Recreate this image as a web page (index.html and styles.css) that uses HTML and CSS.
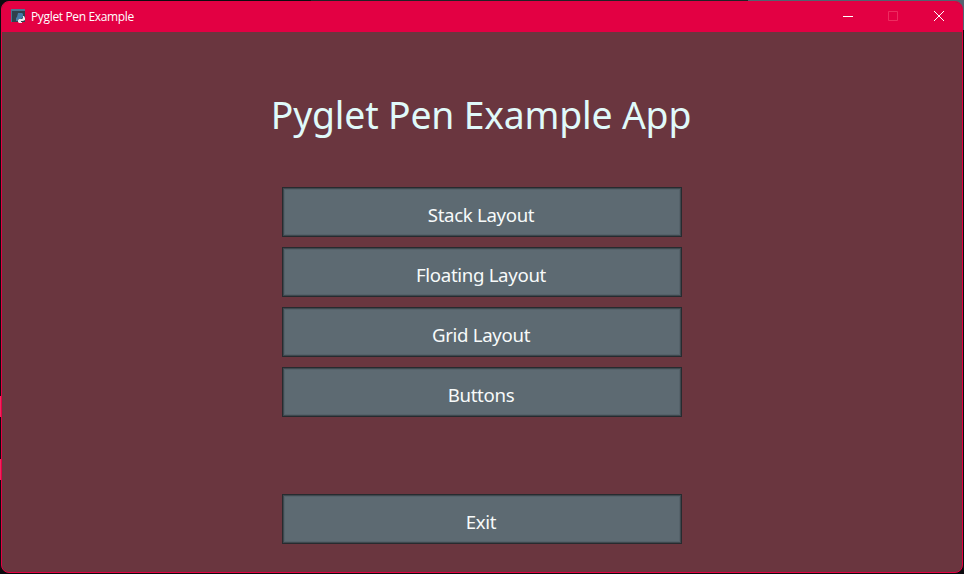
FILE: index.html
```html
<!DOCTYPE html>
<html lang="en">
<head>
<meta charset="utf-8">
<title>Pyglet Pen Example</title>
<link rel="stylesheet" href="styles.css">
</head>
<body>
<div class="window">
  <header class="titlebar">
    <svg class="app-icon" width="16" height="16" viewBox="0 0 16 16">
      <path fill="#30414c" d="M1 0h14v13H1z"/>
      <path fill="#4b7693" d="M1 0h14v2H1zM1 2h1v11H1z"/>
      <path fill="#467ca7" d="M8 4h4l1 1v3l-2 2H8v2H6V9l1-1z"/>
      <path fill="#e8e8ea" d="M13 7h1l1 2v2l-2 1h-2v1h1v1H9l-1-1v-2l1-1h3l1-1z"/>
    </svg>
    <span class="caption">Pyglet Pen Example</span>
    <div class="controls">
      <svg class="control" width="46" height="30" viewBox="0 0 46 30"><path d="M19 14.5h10" stroke="#fff"/></svg>
      <svg class="control" width="46" height="30" viewBox="0 0 46 30"><path d="M18.5 9.5h9v9h-9z" fill="none" stroke="#ee2c60"/></svg>
      <svg class="control" width="46" height="30" viewBox="0 0 46 30"><path d="M18 9l10 10M28 9l-10 10" stroke="#fff"/></svg>
    </div>
  </header>
  <main class="content">
    <h1 class="heading">Pyglet Pen Example App</h1>
    <nav class="menu">
      <button class="button">Stack Layout</button>
      <button class="button">Floating Layout</button>
      <button class="button">Grid Layout</button>
      <button class="button">Buttons</button>
    </nav>
    <button class="button exit">Exit</button>
  </main>
</div>
</body>
</html>
```
FILE: styles.css
```css
* { box-sizing: border-box; }
body {
  margin: 0;
  padding: 1px;
  height: 574px;
  overflow: hidden;
  font-family: "Noto Sans", sans-serif;
  background:
    linear-gradient(#f0285f, #f0285f) 0 396px / 1px 21px no-repeat,
    linear-gradient(#f0285f, #f0285f) 0 459px / 1px 21px no-repeat,
    linear-gradient(#536370, #536370) 748px 0 / 216px 30px no-repeat,
    linear-gradient(#222226, #222226) 311px 0 / 437px 1px no-repeat,
    #0c0c0f;
}
.window {
  height: 572px;
  display: flex;
  flex-direction: column;
  border: 1px solid #e30043;
  border-radius: 8px;
  background: #6a363f;
  overflow: hidden;
}
.titlebar {
  height: 30px;
  flex: none;
  display: flex;
  align-items: center;
  padding-left: 8px;
  background: #e30043;
  color: #fff;
}
.caption {
  margin-left: 5px;
  padding-bottom: 2px;
  font-family: "Open Sans", sans-serif;
  font-size: 12px;
  letter-spacing: -0.35px;
}
.controls { display: flex; margin-left: auto; }
.control { display: block; }
.content {
  flex: 1;
  display: flex;
  flex-direction: column;
  align-items: center;
}
.heading {
  margin: 57px 0 0;
  padding-right: 2px;
  height: 56px;
  line-height: 52px;
  font-size: 37.33px;
  font-weight: 400;
  letter-spacing: -0.18px;
  color: #e0fafa;
  white-space: nowrap;
}
.menu {
  display: grid;
  gap: 10px;
  margin-top: 42px;
}
.button {
  width: 400px;
  height: 50px;
  padding: 5px 2px 0 0;
  border: 1px solid #272b2f;
  background: #5d6a72;
  box-shadow: inset 0 0 0 1px #3e484e, inset 0 0 0 2px #55626a;
  color: #f7fafa;
  font: 18.67px/25px "Noto Sans", sans-serif;
  letter-spacing: -0.33px;
}
.exit { margin-top: 77px; }
```
